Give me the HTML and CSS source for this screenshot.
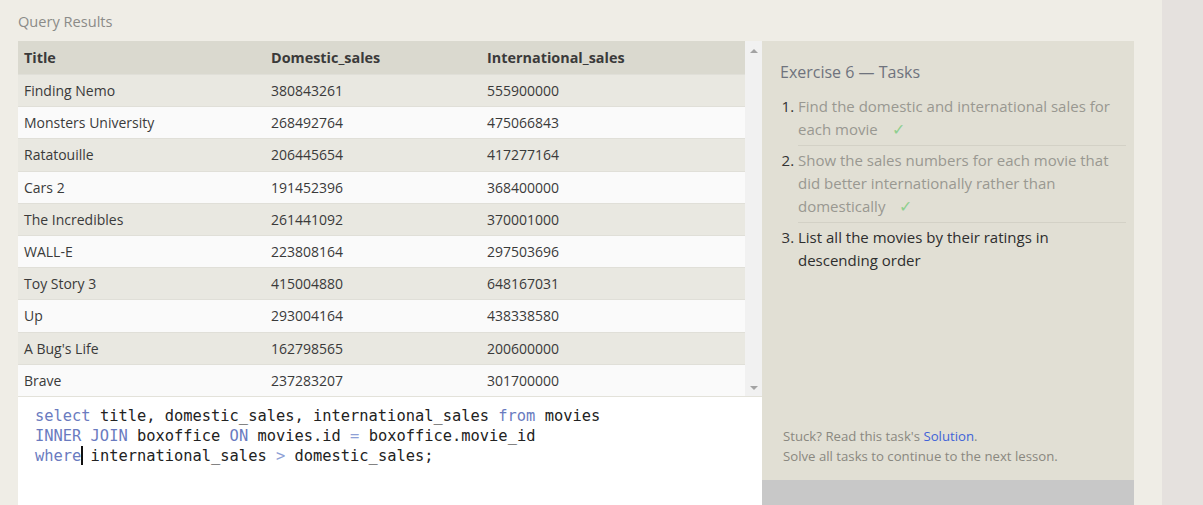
FILE: index.html
```html
<!DOCTYPE html>
<html>
<head>
<meta charset="utf-8">
<link rel="stylesheet" href="styles.css">
</head>
<body>
<div class="page">
  <div class="main">
    <div class="results-label">Query Results</div>
    <div class="workspace">
      <div class="left">
        <div class="table-wrap">
          <table class="results">
            <thead>
              <tr><th class="c1">Title</th><th class="c2">Domestic_sales</th><th class="c3">International_sales</th></tr>
            </thead>
            <tbody>
              <tr><td>Finding Nemo</td><td>380843261</td><td>555900000</td></tr>
              <tr><td>Monsters University</td><td>268492764</td><td>475066843</td></tr>
              <tr><td>Ratatouille</td><td>206445654</td><td>417277164</td></tr>
              <tr><td>Cars 2</td><td>191452396</td><td>368400000</td></tr>
              <tr><td>The Incredibles</td><td>261441092</td><td>370001000</td></tr>
              <tr><td>WALL-E</td><td>223808164</td><td>297503696</td></tr>
              <tr><td>Toy Story 3</td><td>415004880</td><td>648167031</td></tr>
              <tr><td>Up</td><td>293004164</td><td>438338580</td></tr>
              <tr><td>A Bug's Life</td><td>162798565</td><td>200600000</td></tr>
              <tr><td>Brave</td><td>237283207</td><td>301700000</td></tr>
            </tbody>
          </table>
          <div class="scrollbar">
            <span class="arrow up"></span>
            <span class="arrow down"></span>
          </div>
        </div>
        <div class="editor">
          <div class="code-line"><span class="kw">select</span> title, domestic_sales, international_sales <span class="kw">from</span> movies</div>
          <div class="code-line"><span class="kw">INNER JOIN</span> boxoffice <span class="kw">ON</span> movies.id <span class="op">=</span> boxoffice.movie_id</div>
          <div class="code-line"><span class="kw">where</span><span class="cursor"></span> international_sales <span class="op">&gt;</span> domestic_sales;</div>
        </div>
      </div>
      <div class="right">
        <div class="tasks">
          <div class="tasks-title">Exercise 6 — Tasks</div>
          <ol class="task-list">
            <li class="done">Find the domestic and international sales for each movie<span class="check">✓</span></li>
            <li class="done">Show the sales numbers for each movie that did better internationally rather than domestically<span class="check">✓</span></li>
            <li class="current">List all the movies by their ratings in descending order</li>
          </ol>
          <div class="help">
            <div>Stuck? Read this task's <a class="link">Solution</a>.</div>
            <div>Solve all tasks to continue to the next lesson.</div>
          </div>
        </div>
        <div class="grey-box"></div>
      </div>
    </div>
  </div>
  <div class="side"></div>
</div>
</body>
</html>
```

FILE: styles.css
```css
html, body {
  margin: 0;
  padding: 0;
  height: 100%;
  overflow: hidden;
}
body {
  background: #efede6;
  font-family: "Open Sans", "Liberation Sans", sans-serif;
  color: #333;
}
.page {
  display: flex;
  height: 505px;
}
.main {
  width: 1162px;
  padding-left: 18px;
  box-sizing: border-box;
  display: flex;
  flex-direction: column;
}
.side {
  flex: 1;
  background: #e5e1de;
}
.results-label {
  height: 41px;
  box-sizing: border-box;
  padding-top: 11px;
  font-size: 14.6px;
  color: #8b8b88;
  line-height: 20px;
}
.workspace {
  display: flex;
  flex: 1;
}
.left {
  width: 744px;
  display: flex;
  flex-direction: column;
}
.table-wrap {
  display: flex;
  height: 355px;
  border-bottom: 1px solid #e3e2da;
}
.results {
  width: 727px;
  border-collapse: collapse;
  font-size: 14px;
  table-layout: fixed;
}
.results th {
  background: #dad9cf;
  text-align: left;
  font-weight: 700;
  font-size: 14.4px;
  height: 33px;
  padding: 0 6px;
  color: #3a3a3a;
}
.results .c1 { width: 235px; }
.results .c2 { width: 204px; }
.results td {
  height: 31px;
  padding: 0 6px;
  border-top: 1px solid #e0dfd8;
  color: #3a3a3a;
}
.results tbody tr:nth-child(odd) td { background: #e9e8e1; }
.results tbody tr:nth-child(even) td { background: #fafafa; }
.scrollbar {
  width: 17px;
  background: #f1f1f1;
  display: flex;
  flex-direction: column;
  justify-content: space-between;
  align-items: center;
  padding: 8px 0 6px;
  box-sizing: border-box;
}
.arrow {
  width: 0;
  height: 0;
  border-left: 4px solid transparent;
  border-right: 4px solid transparent;
}
.arrow.up { border-bottom: 4px solid #a3a3a3; }
.arrow.down { border-top: 4px solid #a3a3a3; }
.editor {
  flex: 1;
  background: #ffffff;
  padding: 9px 0 0 17px;
  font-family: "DejaVu Sans Mono", "Liberation Mono", monospace;
  font-size: 15.4px;
  line-height: 20px;
  color: #222;
}
.code-line { white-space: pre; }
.kw { color: #6a7bbf; }
.op { color: #8ea0d6; }
.cursor {
  display: inline-block;
  width: 2px;
  height: 19px;
  background: #111;
  vertical-align: -4px;
  margin-right: -2px;
}
.right {
  width: 372px;
  display: flex;
  flex-direction: column;
}
.tasks {
  flex: 1;
  background: #e1dfd4;
  padding: 20px 8px 0 18px;
  display: flex;
  flex-direction: column;
}
.tasks-title {
  font-size: 16px;
  color: #6f737d;
  line-height: 22px;
}
.task-list {
  margin: 12px 0 0;
  padding: 0 0 0 18px;
  font-size: 15px;
  line-height: 23px;
}
.task-list li {
  padding-bottom: 4px;
  margin-bottom: 0;
  border-bottom: 1px solid #d3d1c6;
  padding-left: 0;
}
.task-list li + li { padding-top: 3px; }
.task-list li::marker { color: #333; }
.task-list li.done { color: #999891; }
.task-list li.current {
  color: #2e2e2e;
  border-bottom: none;
}
.check {
  display: inline-block;
  color: #8fcf8f;
  margin-left: 14px;
  font-size: 16px;
}
.help {
  margin-top: auto;
  padding-bottom: 14px;
  font-size: 13.2px;
  line-height: 20px;
  color: #8a8880;
  padding-left: 3px;
}
.link { color: #3f63d8; }
.grey-box {
  height: 25px;
  background: #c8c8c8;
}
```
